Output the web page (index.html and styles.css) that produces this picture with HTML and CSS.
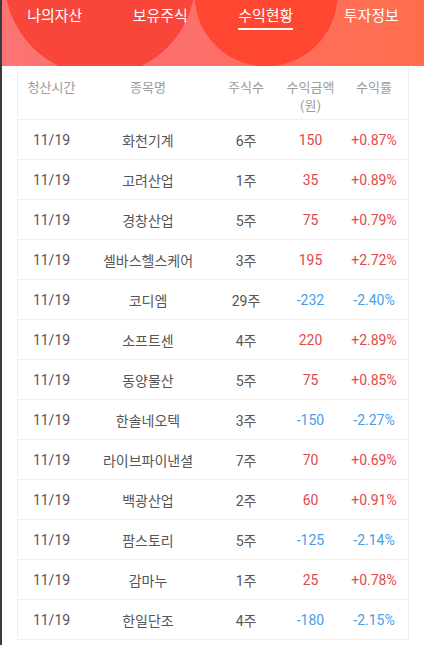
FILE: index.html
```html
<!DOCTYPE html>
<html lang="ko">
<head>
  <meta charset="UTF-8" />
  <meta name="viewport" content="width=device-width, initial-scale=1.0"/>
  <title>수익현황</title>
  <link rel="stylesheet" href="styles.css">
</head>
<body>
  <div class="screen">
    <!-- Top tabs -->
    <div class="topbar">
      <div class="tab">나의자산</div>
      <div class="tab">보유주식</div>
      <div class="tab active"><span>수익현황</span></div>
      <div class="tab">투자정보</div>
    </div>

    <!-- Profit table -->
    <div class="card">
      <div class="row head">
        <div>청산시간</div>
        <div>종목명</div>
        <div>주식수</div>
        <div>수익금액<br>(원)</div>
        <div>수익률</div>
      </div>
      <div class="row"><div>11/19</div><div>화천기계</div><div>6주</div><div class="up">150</div><div class="up">+0.87%</div></div>
      <div class="row"><div>11/19</div><div>고려산업</div><div>1주</div><div class="up">35</div><div class="up">+0.89%</div></div>
      <div class="row"><div>11/19</div><div>경창산업</div><div>5주</div><div class="up">75</div><div class="up">+0.79%</div></div>
      <div class="row"><div>11/19</div><div>셀바스헬스케어</div><div>3주</div><div class="up">195</div><div class="up">+2.72%</div></div>
      <div class="row"><div>11/19</div><div>코디엠</div><div>29주</div><div class="down">-232</div><div class="down">-2.40%</div></div>
      <div class="row"><div>11/19</div><div>소프트센</div><div>4주</div><div class="up">220</div><div class="up">+2.89%</div></div>
      <div class="row"><div>11/19</div><div>동양물산</div><div>5주</div><div class="up">75</div><div class="up">+0.85%</div></div>
      <div class="row"><div>11/19</div><div>한솔네오텍</div><div>3주</div><div class="down">-150</div><div class="down">-2.27%</div></div>
      <div class="row"><div>11/19</div><div>라이브파이낸셜</div><div>7주</div><div class="up">70</div><div class="up">+0.69%</div></div>
      <div class="row"><div>11/19</div><div>백광산업</div><div>2주</div><div class="up">60</div><div class="up">+0.91%</div></div>
      <div class="row"><div>11/19</div><div>팜스토리</div><div>5주</div><div class="down">-125</div><div class="down">-2.14%</div></div>
      <div class="row"><div>11/19</div><div>감마누</div><div>1주</div><div class="up">25</div><div class="up">+0.78%</div></div>
      <div class="row"><div>11/19</div><div>한일단조</div><div>4주</div><div class="down">-180</div><div class="down">-2.15%</div></div>
    </div>
  </div>
</body>
</html>
```

FILE: styles.css
```css
body {
    margin: 0;
    padding: 0;
    background: #ffffff;
    font-family: Roboto, "Noto Sans CJK KR", sans-serif;
}

.screen {
    border-left: 2px solid #3b3b3d;
    min-height: 645px;
    box-sizing: border-box;
}

/* Top tabs with the red circles */
.topbar {
    height: 66px;
    display: flex;
    background:
        radial-gradient(circle at 98px -20px, #f9463a 95px, transparent 95.6px),
        radial-gradient(circle at 264px -5px, #ff4631 71px, transparent 71.6px),
        linear-gradient(90deg, #fb7473 0%, #fd6f6a 45%, #ff6e4b 100%);
}

.tab {
    flex: 1;
    text-align: center;
    color: #ffffff;
    font-size: 15px;
    line-height: 20px;
    padding-top: 6px;
}

.tab.active span {
    display: inline-block;
    padding-bottom: 2px;
    border-bottom: 2px solid #ffffff;
}

/* Table card */
.card {
    margin: 0 15px 0 15px;
    border-left: 1px solid #efefef;
    border-right: 1px solid #efefef;
}

.row {
    display: grid;
    grid-template-columns: 67px 126px 70px 59px 68px;
    align-items: center;
    height: 39px;
    border-bottom: 1px solid #f0f0f0;
    color: #555555;
    font-size: 14px;
    text-align: center;
}

.row.head {
    height: 53px;
    align-items: start;
    color: #9c9c9c;
    font-size: 13px;
    line-height: 18px;
}

.row.head div {
    padding-top: 13px;
}

.up {
    color: #e2484a;
}

.down {
    color: #4b9de6;
}
```
